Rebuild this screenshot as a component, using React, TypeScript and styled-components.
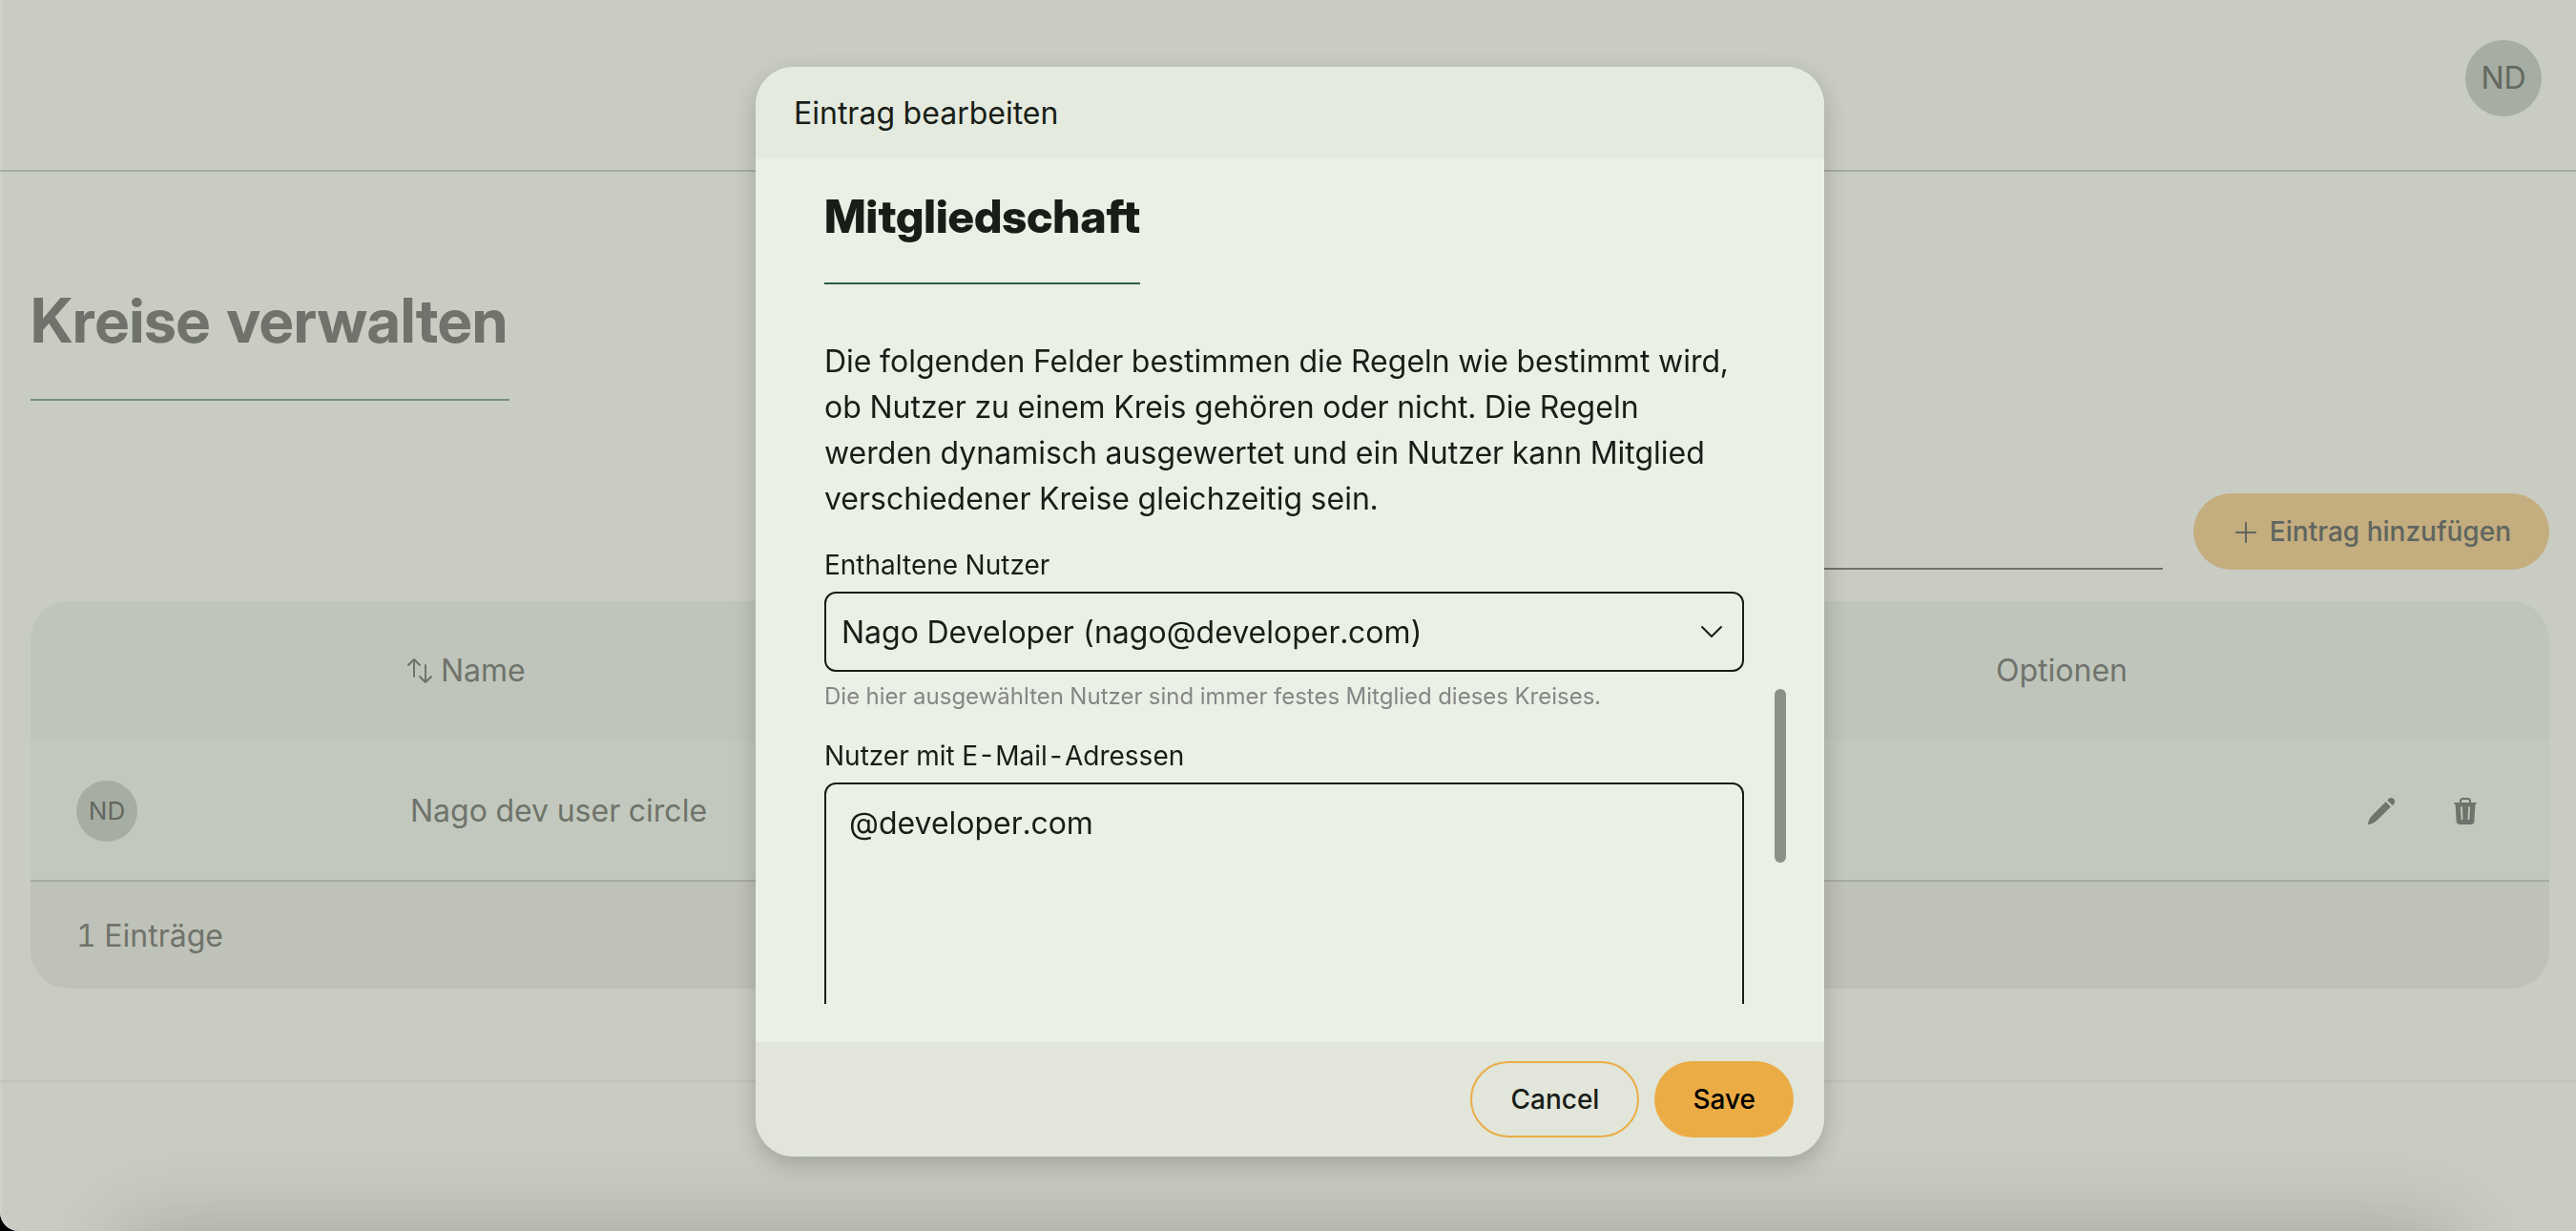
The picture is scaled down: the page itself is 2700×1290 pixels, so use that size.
import React from "react";
import styled, { createGlobalStyle } from "styled-components";

const color = {
  page: "#c9ccc2",
  tableHead: "#bfc5bb",
  tableRow: "#c2c8bd",
  tableFoot: "#bfc2b8",
  line: "#a6aca1",
  muted: "#6f736b",
  ink: "#181d17",
  accent: "#ebac45",
};

const displayFont = `"Inter Display", Inter, "Liberation Sans", sans-serif`;

const GlobalStyle = createGlobalStyle`
  *, *::before, *::after { box-sizing: border-box; }
  html, body, #root { height: 100%; }
  body {
    margin: 0;
    overflow: hidden;
    background: #000;
    color: ${color.muted};
    font: 400 32px/48px Inter, "Liberation Sans", sans-serif;
    font-variant-numeric: tabular-nums;
  }
  h1, h2, p { margin: 0; }
  button, select, textarea, input { font: inherit; color: inherit; }
  button { cursor: pointer; }
  svg { display: block; flex: none; }
`;

const Page = styled.div`
  display: flex;
  flex-direction: column;
  min-height: 100%;
  background: ${color.page};
  box-shadow: inset 2px 0 #d0d3ca;
  border-bottom-left-radius: 20px;
`;

const TopBar = styled.header`
  display: flex;
  justify-content: flex-end;
  padding: 42px 36px 56px;
  border-bottom: 2px solid ${color.line};
`;

const Avatar = styled.span<{ $size: number; $text: number }>`
  display: flex;
  align-items: center;
  justify-content: center;
  width: ${(p) => p.$size}px;
  height: ${(p) => p.$size}px;
  border-radius: 50%;
  background: #a6ada2;
  color: #636760;
  font-size: ${(p) => p.$text}px;
`;

const Main = styled.main`
  display: flex;
  flex-direction: column;
  padding: 116px 28px 96px 32px;
`;

const PageTitle = styled.h1`
  align-self: flex-start;
  padding: 0 2px 42px 0;
  border-bottom: 2px solid #769080;
  font-family: ${displayFont};
  font-size: 64px;
  line-height: 80px;
  font-weight: 700;
`;

const Toolbar = styled.div`
  display: flex;
  justify-content: flex-end;
  align-items: flex-end;
  gap: 32px;
  padding: 97px 0 33px;
`;

const Search = styled.input`
  width: 480px;
  height: 80px;
  border: 0;
  border-bottom: 2px solid ${color.muted};
  background: transparent;
`;

const AddButton = styled.button`
  display: flex;
  align-items: center;
  gap: 12px;
  height: 80px;
  padding: 0 40px;
  border: 0;
  border-radius: 40px;
  background: #c4ad7f;
  color: #5f6560;
  font-size: 28px;
  font-weight: 500;
`;

const Table = styled.table`
  width: 100%;
  border-collapse: separate;
  border-spacing: 0;
  border-radius: 40px;
  overflow: hidden;
  table-layout: fixed;
`;

const HeadCell = styled.th`
  height: 146px;
  padding: 0 44px;
  background: ${color.tableHead};
  font-weight: 400;
  text-align: left;
`;

const Cell = styled.td`
  height: 148px;
  padding: 2px 48px 0;
  background: ${color.tableRow};
  border-bottom: 2px solid ${color.line};
`;

const FootCell = styled.td`
  height: 112px;
  padding: 2px 48px 0;
  background: ${color.tableFoot};
`;

const SortButton = styled.button`
  display: flex;
  align-items: center;
  gap: 8px;
  padding: 0;
  border: 0;
  background: transparent;
`;

const RowActions = styled.div`
  display: flex;
  justify-content: flex-end;
  gap: 48px;
  padding-right: 20px;
`;

const IconButton = styled.button`
  display: flex;
  align-items: center;
  justify-content: center;
  width: 40px;
  height: 40px;
  padding: 0;
  border: 0;
  background: transparent;
`;

const PageFooter = styled.footer`
  flex: 1;
  border-top: 2px solid #bfc2b8;
`;

const BottomShade = styled.div`
  position: fixed;
  left: 130px;
  right: 130px;
  bottom: -120px;
  height: 120px;
  box-shadow: 0 0 92px rgba(0, 0, 0, 0.2);
`;

const Overlay = styled.div`
  position: fixed;
  inset: 0;
  display: flex;
  justify-content: center;
  padding: 70px 0 78px 4px;
`;

const Dialog = styled.section`
  display: flex;
  flex-direction: column;
  width: 100%;
  max-width: 1120px;
  border-radius: 40px;
  overflow: hidden;
  background: #eaf0e5;
  color: ${color.ink};
  box-shadow: 0 8px 24px rgba(0, 0, 0, 0.2);
`;

const DialogHeader = styled.header`
  padding: 25px 40px 23px;
  background: #e5eadf;
`;

const DialogBody = styled.div`
  display: flex;
  flex: 1;
  min-height: 0;
  padding: 0 40px 40px 72px;
`;

const ScrollContent = styled.div`
  display: flex;
  flex-direction: column;
  flex: 1;
  overflow: hidden;
  padding-top: 32px;
`;

const ScrollTrack = styled.div`
  padding: 556px 0 0 32px;
`;

const ScrollThumb = styled.div`
  width: 12px;
  height: 182px;
  border-radius: 6px;
  background: #8b9186;
`;

const SectionTitle = styled.h2`
  align-self: flex-start;
  flex: none;
  padding-bottom: 40px;
  border-bottom: 2px solid #2b5f43;
  font-family: ${displayFont};
  font-size: 48px;
  line-height: 58px;
  font-weight: 800;
`;

const Intro = styled.p`
  padding: 57px 0 21px;
`;

const Label = styled.label`
  flex: none;
  padding: 4px 0 8px;
  font-size: 28px;
  line-height: 40px;
`;

const SelectWrap = styled.div`
  position: relative;
  flex: none;
`;

const Select = styled.select`
  display: block;
  width: 100%;
  height: 84px;
  padding: 2px 72px 0 16px;
  border: 2px solid ${color.ink};
  border-radius: 12px;
  background: transparent;
  appearance: none;
`;

const SelectArrow = styled.span`
  position: absolute;
  right: 22px;
  top: 0;
  bottom: 0;
  display: flex;
  align-items: center;
  pointer-events: none;
`;

const Hint = styled.p`
  flex: none;
  padding: 10px 0 22px;
  color: #868686;
  font-size: 24px;
  line-height: 32px;
`;

const TextArea = styled.textarea`
  display: block;
  flex: none;
  width: 100%;
  height: 360px;
  padding: 17px 24px;
  border: 2px solid ${color.ink};
  border-radius: 12px;
  background: transparent;
  resize: none;
`;

const DialogFooter = styled.footer`
  display: flex;
  justify-content: flex-end;
  gap: 16px;
  padding: 20px 32px;
  background: #e1e5da;
`;

const PillButton = styled.button<{ $filled?: boolean }>`
  height: 80px;
  padding: 0 40px;
  border: ${(p) => (p.$filled ? "0" : `2px solid ${color.accent}`)};
  border-radius: 40px;
  background: ${(p) => (p.$filled ? color.accent : "transparent")};
  color: ${(p) => (p.$filled ? "#000" : color.ink)};
  font-size: 28px;
  font-weight: 500;
`;

const PlusIcon = () => (
  <svg width="28" height="28" viewBox="0 0 28 28" fill="none" stroke="currentColor" strokeWidth="2" strokeLinecap="round">
    <path d="M15 5v20M5 15h20" />
  </svg>
);

const SortIcon = () => (
  <svg width="28" height="28" viewBox="0 0 28 28" fill="none" stroke="currentColor" strokeWidth="2" strokeLinecap="round" strokeLinejoin="round">
    <path d="M8 20V2M2 8l6-6 6 6M20 8v18M14 20l6 6 6-6" />
  </svg>
);

const PencilIcon = () => (
  <svg width="28" height="28" viewBox="0 0 28 28" fill="currentColor">
    <path d="M18.6 4.2l5.2 5.2L9.6 23.6C7.4 25.8 3.8 27.6 0.8 28a.7.7 0 0 1-.8-.8C.3 24 2.2 20.6 4.4 18.4z" />
    <path d="M20.2 2.6l1.3-1.3a3.9 3.9 0 0 1 5.4 0 3.9 3.9 0 0 1 0 5.4L25.5 8z" />
  </svg>
);

const TrashIcon = () => (
  <svg width="24" height="28" viewBox="0 0 24 28" fill="currentColor">
    <path d="M7 5V3.6A2.6 2.6 0 0 1 9.6 1h4.8A2.6 2.6 0 0 1 17 3.6V5" fill="none" stroke="currentColor" strokeWidth="2" />
    <path
      fillRule="evenodd"
      d="M.8 5h22.4a.8.8 0 0 1 .8.8c0 .7-.6 1.2-1.3 1.2h-.3l-1 17.2A4 4 0 0 1 17.4 28H6.6a4 4 0 0 1-4-3.8L1.6 7h-.3C.6 7 0 6.5 0 5.8A.8.8 0 0 1 .8 5zM8 9a.9.9 0 0 0-.9 1l.5 12.2a.9.9 0 0 0 1.8 0L8.9 10A.9.9 0 0 0 8 9zm8 0a.9.9 0 0 0-.9 1l-.5 12.2a.9.9 0 0 0 1.8 0l.5-12.2A.9.9 0 0 0 16 9z"
    />
  </svg>
);

const ChevronIcon = () => (
  <svg width="24" height="14" viewBox="0 0 24 14" fill="none" stroke="currentColor" strokeWidth="2" strokeLinecap="round" strokeLinejoin="round">
    <path d="M2 2l10 10L22 2" />
  </svg>
);

export default function App() {
  return (
    <>
      <GlobalStyle />
      <Page>
        <TopBar>
          <Avatar $size={80} $text={32}>ND</Avatar>
        </TopBar>
        <Main>
          <PageTitle>Kreise verwalten</PageTitle>
          <Toolbar>
            <Search type="search" aria-label="Suche" />
            <AddButton type="button">
              <PlusIcon />
              Eintrag hinzufügen
            </AddButton>
          </Toolbar>
          <Table>
            <colgroup>
              <col style={{ width: 350 }} />
              <col />
              <col style={{ width: 624 }} />
            </colgroup>
            <thead>
              <tr>
                <HeadCell aria-label="Bild" />
                <HeadCell>
                  <SortButton type="button">
                    <SortIcon />
                    Name
                  </SortButton>
                </HeadCell>
                <HeadCell>Optionen</HeadCell>
              </tr>
            </thead>
            <tbody>
              <tr>
                <Cell>
                  <Avatar $size={64} $text={26}>ND</Avatar>
                </Cell>
                <Cell>Nago dev user circle</Cell>
                <Cell>
                  <RowActions>
                    <IconButton type="button" aria-label="Bearbeiten">
                      <PencilIcon />
                    </IconButton>
                    <IconButton type="button" aria-label="Löschen">
                      <TrashIcon />
                    </IconButton>
                  </RowActions>
                </Cell>
              </tr>
            </tbody>
            <tfoot>
              <tr>
                <FootCell colSpan={3}>1 Einträge</FootCell>
              </tr>
            </tfoot>
          </Table>
        </Main>
        <PageFooter />
      </Page>
      <BottomShade />
      <Overlay>
        <Dialog role="dialog" aria-modal="true" aria-labelledby="dialog-title">
          <DialogHeader id="dialog-title">Eintrag bearbeiten</DialogHeader>
          <DialogBody>
            <ScrollContent>
              <SectionTitle>Mitgliedschaft</SectionTitle>
              <Intro>
                Die folgenden Felder bestimmen die Regeln wie bestimmt wird, ob Nutzer zu einem Kreis gehören oder
                nicht. Die Regeln werden dynamisch ausgewertet und ein Nutzer kann Mitglied verschiedener Kreise
                gleichzeitig sein.
              </Intro>
              <Label htmlFor="members">Enthaltene Nutzer</Label>
              <SelectWrap>
                <Select id="members" defaultValue="nago">
                  <option value="nago">Nago Developer (nago@developer.com)</option>
                </Select>
                <SelectArrow>
                  <ChevronIcon />
                </SelectArrow>
              </SelectWrap>
              <Hint>Die hier ausgewählten Nutzer sind immer festes Mitglied dieses Kreises.</Hint>
              <Label htmlFor="mails">Nutzer mit E-Mail-Adressen</Label>
              <TextArea id="mails" defaultValue="@developer.com" />
            </ScrollContent>
            <ScrollTrack>
              <ScrollThumb />
            </ScrollTrack>
          </DialogBody>
          <DialogFooter>
            <PillButton type="button">Cancel</PillButton>
            <PillButton type="button" $filled>
              Save
            </PillButton>
          </DialogFooter>
        </Dialog>
      </Overlay>
    </>
  );
}
